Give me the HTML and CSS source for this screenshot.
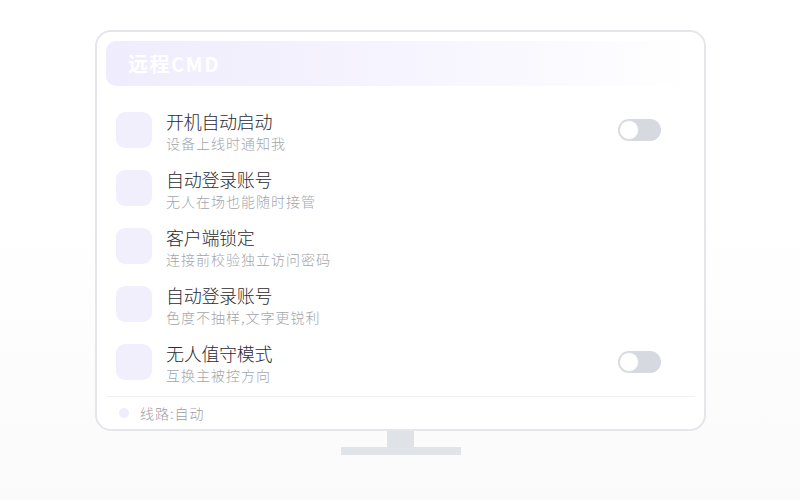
FILE: index.html
```html
<!DOCTYPE html>
<html lang="zh-CN">
<head>
<meta charset="utf-8">
<title>远程CMD</title>
<link rel="stylesheet" href="styles.css">
</head>
<body>
<div class="stage">
  <div class="monitor">
    <div class="header">远程CMD</div>
    <ul class="list">
      <li class="row">
        <span class="icon"></span>
        <div class="text"><div class="title">开机自动启动</div><div class="sub">设备上线时通知我</div></div>
        <span class="toggle"><span class="knob"></span></span>
      </li>
      <li class="row">
        <span class="icon"></span>
        <div class="text"><div class="title">自动登录账号</div><div class="sub">无人在场也能随时接管</div></div>
      </li>
      <li class="row">
        <span class="icon"></span>
        <div class="text"><div class="title">客户端锁定</div><div class="sub">连接前校验独立访问密码</div></div>
      </li>
      <li class="row">
        <span class="icon"></span>
        <div class="text"><div class="title">自动登录账号</div><div class="sub">色度不抽样,文字更锐利</div></div>
      </li>
      <li class="row">
        <span class="icon"></span>
        <div class="text"><div class="title">无人值守模式</div><div class="sub">互换主被控方向</div></div>
        <span class="toggle"><span class="knob"></span></span>
      </li>
    </ul>
    <div class="footer"><span class="dot"></span><span class="route">线路:自动</span></div>
  </div>
  <div class="neck"></div>
  <div class="base"></div>
</div>
</body>
</html>
```
FILE: styles.css
```css
html, body {
  margin: 0;
  padding: 0;
}
body {
  width: 800px;
  height: 500px;
  background: linear-gradient(180deg, #ffffff 0%, #ffffff 45%, #fafafb 100%);
  font-family: "Noto Sans CJK SC", "Noto Sans", sans-serif;
  overflow: hidden;
}
.stage {
  display: flex;
  flex-direction: column;
  align-items: center;
  padding-top: 30px;
}
.monitor {
  width: 611px;
  height: 401px;
  box-sizing: border-box;
  border: 2px solid #e4e6ea;
  border-radius: 16px;
  background: #ffffff;
  padding: 9px 9px 0 9px;
  display: flex;
  flex-direction: column;
  margin-left: 1px;
}
.header {
  height: 45px;
  border-radius: 10px;
  background: linear-gradient(90deg, #efecfd 0%, #f6f4fe 50%, rgba(250, 249, 255, 0.6) 85%, rgba(255, 255, 255, 0) 100%);
  color: #ffffff;
  font-size: 20px;
  font-weight: 700;
  letter-spacing: 1.5px;
  line-height: 45px;
  padding-left: 22px;
  margin-right: 4px;
}
.list {
  list-style: none;
  margin: 15px 0 0 0;
  padding: 0 34px 0 10px;
}
.row {
  height: 58px;
  display: flex;
  align-items: center;
}
.icon {
  width: 36px;
  height: 36px;
  border-radius: 9px;
  background: #f2effd;
  flex: none;
}
.text {
  margin-left: 14px;
  flex: 1;
  margin-top: 2px;
}
.title {
  font-size: 18px;
  font-weight: 300;
  color: #2b2b30;
  line-height: 24px;
  letter-spacing: -0.3px;
}
.sub {
  font-size: 14px;
  font-weight: 300;
  color: #a2a5ab;
  line-height: 20px;
  letter-spacing: 1px;
}
.toggle {
  width: 43px;
  height: 22px;
  border-radius: 11px;
  background: #d6d9df;
  display: flex;
  align-items: center;
  padding-left: 1px;
  box-sizing: border-box;
}
.knob {
  width: 20px;
  height: 20px;
  border-radius: 50%;
  background: #ffffff;
  box-sizing: border-box;
  border: 1px solid #dcdfe4;
}
.footer {
  margin-top: 5px;
  border-top: 1px solid #eff0f3;
  height: 32px;
  display: flex;
  align-items: center;
  padding-left: 13px;
}
.dot {
  width: 10px;
  height: 10px;
  border-radius: 50%;
  background: #efecfc;
}
.route {
  margin-left: 11px;
  font-size: 14px;
  font-weight: 300;
  color: #9b9ea5;
  letter-spacing: 1px;
}
.neck {
  width: 27px;
  height: 16px;
  background: #dfe2e7;
  margin-left: 1px;
}
.base {
  width: 120px;
  height: 8px;
  background: #e0e3e8;
  margin-left: 1px;
}
```
